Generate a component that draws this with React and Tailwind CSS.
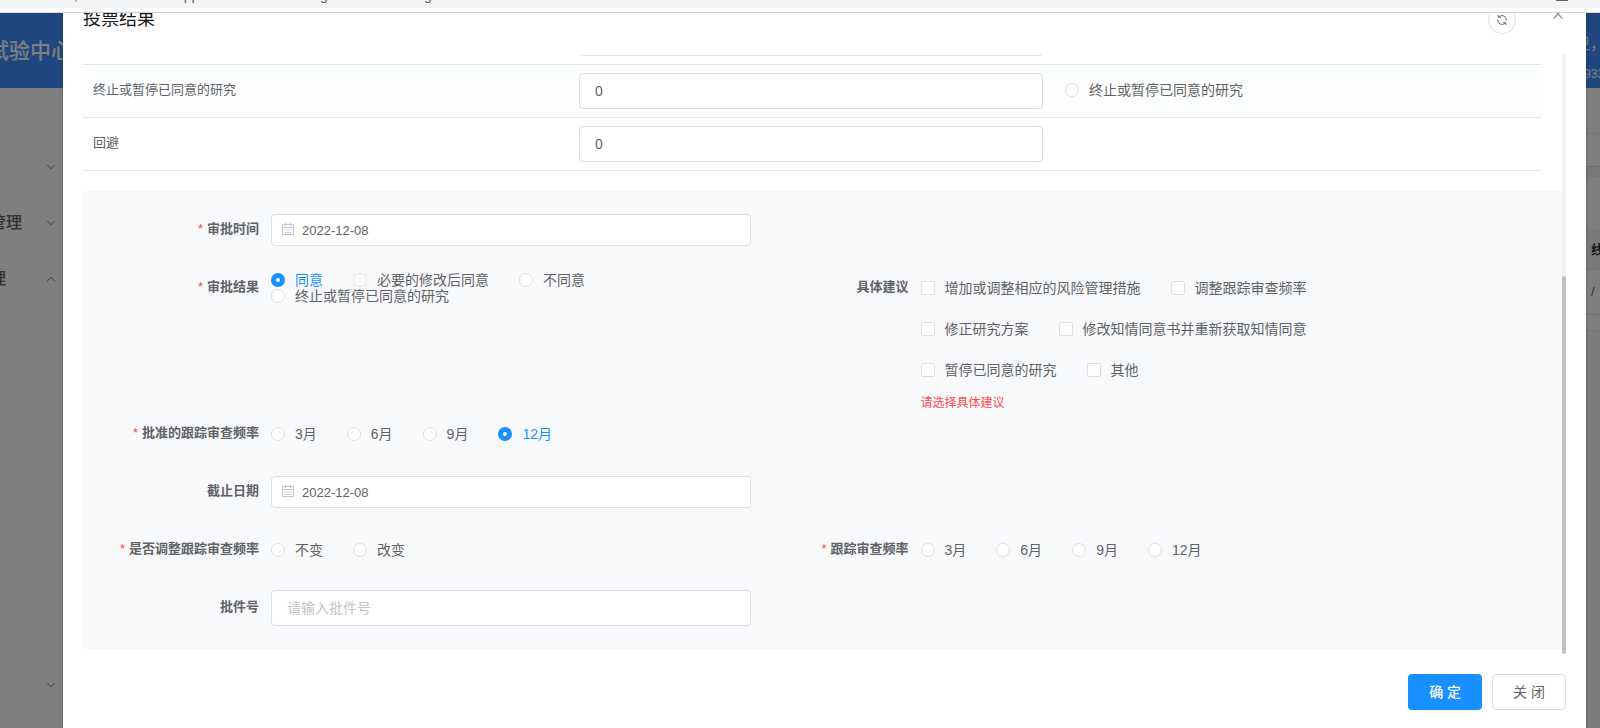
import { useState } from 'react';
import clsx from 'clsx';
import { ChevronDown, ChevronUp, X } from 'lucide-react';

const MENUS = [
  { id: 'm1', label: '', className: 'gap-6' },
  { id: 'm2', label: '管理', className: 'gap-[22px]' },
  { id: 'm3', label: '管理', open: true, className: 'gap-[38px]' },
];

const MONTHS = ['3月', '6月', '9月', '12月'];
const RESULTS = ['同意', '必要的修改后同意', '不同意', '终止或暂停已同意的研究'];
const ADVICES = [
  '增加或调整相应的风险管理措施',
  '调整跟踪审查频率',
  '修正研究方案',
  '修改知情同意书并重新获取知情同意',
  '暂停已同意的研究',
  '其他',
];

const VOTES = [
  { id: 'disagree', label: '不同意' },
  { id: 'stop', label: '终止或暂停已同意的研究', radio: '终止或暂停已同意的研究' },
  { id: 'avoid', label: '回避' },
];

const INPUT = 'block w-full rounded border border-[#dcdfe6] bg-white text-[#606266] outline-none focus:border-[#1890ff]';

function CalendarIcon() {
  return (
    <svg
      className="pointer-events-none absolute left-[11px] top-[9px] h-3 w-3 text-[#c0c4cc]"
      viewBox="0 0 12 12"
      fill="none"
      stroke="currentColor"
    >
      <path d="M.5 1.5h11v10H.5z" />
      <path d="M0 4.5h12M3.5 0v3M8.5 0v3" strokeWidth="1.2" />
      <path d="M2.5 7h7M2.5 9.5h7" strokeDasharray="1.8 .8" />
    </svg>
  );
}

function RefreshIcon() {
  return (
    <svg className="h-3 w-3" viewBox="0 0 12 12" fill="none" stroke="currentColor">
      <path d="M3.2 2.6A4.4 4.4 0 0 1 10.4 6.2M8.8 9.4A4.4 4.4 0 0 1 1.6 5.8" />
      <path d="M2.2 1v2.3h2.6M9.8 11V8.7H7.2" />
    </svg>
  );
}

function Radio({ name, label, checked, onChange }) {
  return (
    <label className={clsx('flex cursor-pointer items-center gap-2.5 text-sm leading-4', checked ? 'text-[#1890ff]' : 'text-[#606266]')}>
      <input
        type="radio"
        name={name}
        checked={checked}
        onChange={onChange}
        className="h-3.5 w-3.5 shrink-0 appearance-none rounded-full border border-[#dcdfe6] bg-white checked:border-[5px] checked:border-[#1890ff]"
      />
      {label}
    </label>
  );
}

function RadioGroup({ name, label, options, value, onChange, className = 'min-h-9 items-center' }) {
  return (
    <div role="radiogroup" aria-label={label} className={clsx('flex flex-wrap gap-x-[30px]', className)}>
      {options.map((o) => (
        <Radio key={o} name={name} label={o} checked={value === o} onChange={() => onChange(o)} />
      ))}
    </div>
  );
}

function Field({ label, htmlFor, required, className, children }) {
  const Tag = htmlFor ? 'label' : 'span';
  return (
    <div className={clsx('flex', className)}>
      <Tag
        htmlFor={htmlFor}
        className="w-40 shrink-0 whitespace-nowrap pr-3 text-right text-[13px] font-bold leading-[34px] text-[#606266]"
      >
        {required && <span className="mr-1 font-normal text-[#ff4949]">*</span>}
        {label}
      </Tag>
      <div className="min-w-0 flex-1">{children}</div>
    </div>
  );
}

function DateInput({ id, value, onChange }) {
  return (
    <div className="flex h-9 items-center">
      <div className="relative w-full">
        <CalendarIcon />
        <input id={id} value={value} onChange={(e) => onChange(e.target.value)} className={clsx(INPUT, 'h-8 pl-[30px] text-[13px]')} />
      </div>
    </div>
  );
}

function BackgroundPage() {
  return (
    <div className="flex h-full flex-col bg-white">
      <header className="flex h-[75px] shrink-0 items-center justify-between bg-[#408cfe] text-white">
        <div className="w-[72px] overflow-hidden">
          <h1 className="-ml-3 whitespace-nowrap text-[21px] font-medium">试验中心</h1>
        </div>
        <div className="w-5 overflow-hidden whitespace-nowrap pt-4">
          <p className="-ml-1.5 text-base leading-[30px]">卫，</p>
          <p className="pl-1 text-xs leading-[30px]">933</p>
        </div>
      </header>
      <div className="flex min-h-0 flex-1 justify-between">
        <nav className="flex w-[63px] flex-col overflow-hidden pb-[15px] pt-[51px]">
          {MENUS.map((m) => (
            <a key={m.id} href="#" className={clsx('flex h-14 items-center justify-end whitespace-nowrap pr-[5px] text-base font-medium text-[#606266]', m.className)}>
              {m.label}
              {m.open ? <ChevronUp size={14} strokeWidth={1.5} className="shrink-0" /> : <ChevronDown size={14} strokeWidth={1.5} className="shrink-0" />}
            </a>
          ))}
          <a href="#" aria-label="展开" className="mt-auto flex h-14 items-center justify-end pr-[5px] text-[#606266]">
            <ChevronDown size={14} strokeWidth={1.5} />
          </a>
        </nav>
        <div className="flex w-3.5 flex-col overflow-hidden bg-[#fcfcfc] text-[13px] text-[#606266]">
          <div className="h-[46px] border-b border-[#ececec]" />
          <div className="h-[33px] border-b border-[#d8dce5]" />
          <div className="h-2.5 bg-[#eef0f4]" />
          <div className="h-[53px]" />
          <div className="flex h-10 items-center border-b border-[#dfe2ea] bg-[#f2f2f2] pl-[5px] font-bold text-[#303133]">线</div>
          <div className="flex h-[45px] items-center border-b border-[#dfe2ea] pl-[5px]">/</div>
          <div className="h-4 border-b border-[#ececec]" />
          <div className="flex-1 bg-[#f8f8f8]" />
        </div>
      </div>
    </div>
  );
}

function VoteTable({ picked, onPick }) {
  return (
    <div className="pr-[21px]">
      <table className="w-full table-fixed border-separate border-spacing-0 text-left text-[13px] text-[#606266]">
        <tbody>
          {VOTES.map((row) => (
            <tr key={row.id} className={clsx(row.id === 'stop' && 'bg-[#fdfefe]')}>
              <td className="border-b border-[#dfe6ec] px-2.5 pb-2.5 pt-2">
                <label htmlFor={row.id}>{row.label}</label>
              </td>
              <td className="border-b border-[#dfe6ec] py-2 pl-2.5 pr-3">
                <input id={row.id} defaultValue="0" className={clsx(INPUT, 'h-9 px-[15px] text-sm')} />
              </td>
              <td className="border-b border-[#dfe6ec] px-2.5 pb-2.5 pt-2">
                {row.radio && <Radio name="vote" label={row.radio} checked={picked === row.id} onChange={() => onPick(row.id)} />}
              </td>
            </tr>
          ))}
        </tbody>
      </table>
    </div>
  );
}

export default function App() {
  const [vote, setVote] = useState('');
  const [approveDate, setApproveDate] = useState('2022-12-08');
  const [endDate, setEndDate] = useState('2022-12-08');
  const [result, setResult] = useState('同意');
  const [frequency, setFrequency] = useState('12月');
  const [adjust, setAdjust] = useState('');
  const [newFrequency, setNewFrequency] = useState('');
  const [advices, setAdvices] = useState([]);

  const toggleAdvice = (a) => {
    setAdvices((prev) => (prev.includes(a) ? prev.filter((x) => x !== a) : [...prev, a]));
  };

  return (
    <div className="flex h-screen flex-col overflow-hidden font-['Liberation_Sans','Noto_Sans_CJK_SC',sans-serif]">
      {/* 浏览器地址栏 */}
      <div className="flex h-[13px] shrink-0 flex-col border-b border-[#dadce0] bg-white">
        <div className="flex h-2 items-end justify-between overflow-hidden bg-[#f1f3f4] pb-[5px] text-sm leading-4 text-[#5f6368]">
          <div className="flex pl-[74px]">
            <span className="w-[98px]">,</span>
            <span className="w-[60px]">/app</span>
            <span className="w-[88px]">/</span>
            <span className="w-[104px]">g</span>
            <span>g</span>
          </div>
          <div className="mr-8 h-px w-3 self-start bg-[#5f6368]" />
        </div>
      </div>

      <div className="relative min-h-0 flex-1">
        <BackgroundPage />
        <div className="absolute inset-0 bg-black/50" />

        <div role="dialog" aria-label="投票结果" className="absolute inset-y-0 left-[63px] right-3.5 flex flex-col bg-white px-5 shadow-[0_1px_3px_rgba(0,0,0,0.3)]">
          <header className="flex h-[41px] shrink-0 items-end overflow-hidden pb-5">
            <div className="flex h-7 w-full items-start">
              <h2 className="flex-1 text-lg leading-[26px] text-[#17181a]">投票结果</h2>
              <button aria-label="刷新" className="flex h-7 w-7 items-center justify-center rounded-full border border-[#dcdfe6] text-[#606266]">
                <RefreshIcon />
              </button>
              <button aria-label="关闭弹窗" className="ml-[34px] text-[#909399]">
                <X size={16} strokeWidth={2} />
              </button>
            </div>
          </header>

          <div className="flex min-h-0 flex-1">
            <div className="flex min-w-0 flex-1 flex-col justify-end overflow-hidden pb-[5px]">
              <VoteTable picked={vote} onPick={setVote} />

              <form className="mt-5 grid shrink-0 auto-rows-[minmax(58px,auto)] grid-cols-[5fr_5fr_1fr] gap-x-2.5 bg-[#f8f9fb] pb-px pl-7 pr-6 pt-[21px]">
                <Field label="审批时间" htmlFor="approve-date" required className="col-start-1">
                  <DateInput id="approve-date" value={approveDate} onChange={setApproveDate} />
                </Field>

                <Field label="审批结果" required className="col-start-1">
                  <RadioGroup name="result" label="审批结果" options={RESULTS} value={result} onChange={setResult} className="pt-0.5" />
                </Field>
                <Field label="具体建议" className="col-start-2">
                  <div className="flex flex-wrap gap-x-[30px] gap-y-[5px]">
                    {ADVICES.map((a) => (
                      <label key={a} className="flex h-9 cursor-pointer items-center gap-2.5 text-sm text-[#606266]">
                        <input
                          type="checkbox"
                          checked={advices.includes(a)}
                          onChange={() => toggleAdvice(a)}
                          className="h-3.5 w-3.5 appearance-none rounded-xs border border-[#dcdfe6] bg-white checked:border-[#1890ff] checked:bg-[#1890ff]"
                        />
                        {a}
                      </label>
                    ))}
                  </div>
                  {advices.length === 0 && <p className="pb-1.5 pt-2 text-xs leading-[14px] text-[#ff4949]">请选择具体建议</p>}
                </Field>

                <Field label="批准的跟踪审查频率" required className="col-start-1">
                  <RadioGroup name="frequency" label="批准的跟踪审查频率" options={MONTHS} value={frequency} onChange={setFrequency} />
                </Field>

                <Field label="截止日期" htmlFor="end-date" className="col-start-1">
                  <DateInput id="end-date" value={endDate} onChange={setEndDate} />
                </Field>

                <Field label="是否调整跟踪审查频率" required className="col-start-1">
                  <RadioGroup name="adjust" label="是否调整跟踪审查频率" options={['不变', '改变']} value={adjust} onChange={setAdjust} />
                </Field>
                <Field label="跟踪审查频率" required className="col-start-2">
                  <RadioGroup name="new-frequency" label="跟踪审查频率" options={MONTHS} value={newFrequency} onChange={setNewFrequency} />
                </Field>

                <Field label="批件号" htmlFor="doc-no" className="col-start-1">
                  <input id="doc-no" placeholder="请输入批件号" className={clsx(INPUT, 'h-9 px-[15px] text-sm placeholder:text-[#c0c4cc]')} />
                </Field>
              </form>
            </div>

            {/* 滚动条 */}
            <div className="flex w-1 flex-col justify-end rounded-full bg-[#f1f1f1]">
              <div className="h-[63%] rounded-full bg-[#c1c1c1]" />
            </div>
          </div>

          <footer className="flex shrink-0 justify-end gap-2.5 pb-[18px] pt-5 text-sm">
            <button className="h-9 rounded bg-[#1890ff] px-[21px] font-medium text-white">确 定</button>
            <button className="h-9 rounded border border-[#dcdfe6] bg-white px-5 text-[#606266]">关 闭</button>
          </footer>
        </div>
      </div>
    </div>
  );
}
